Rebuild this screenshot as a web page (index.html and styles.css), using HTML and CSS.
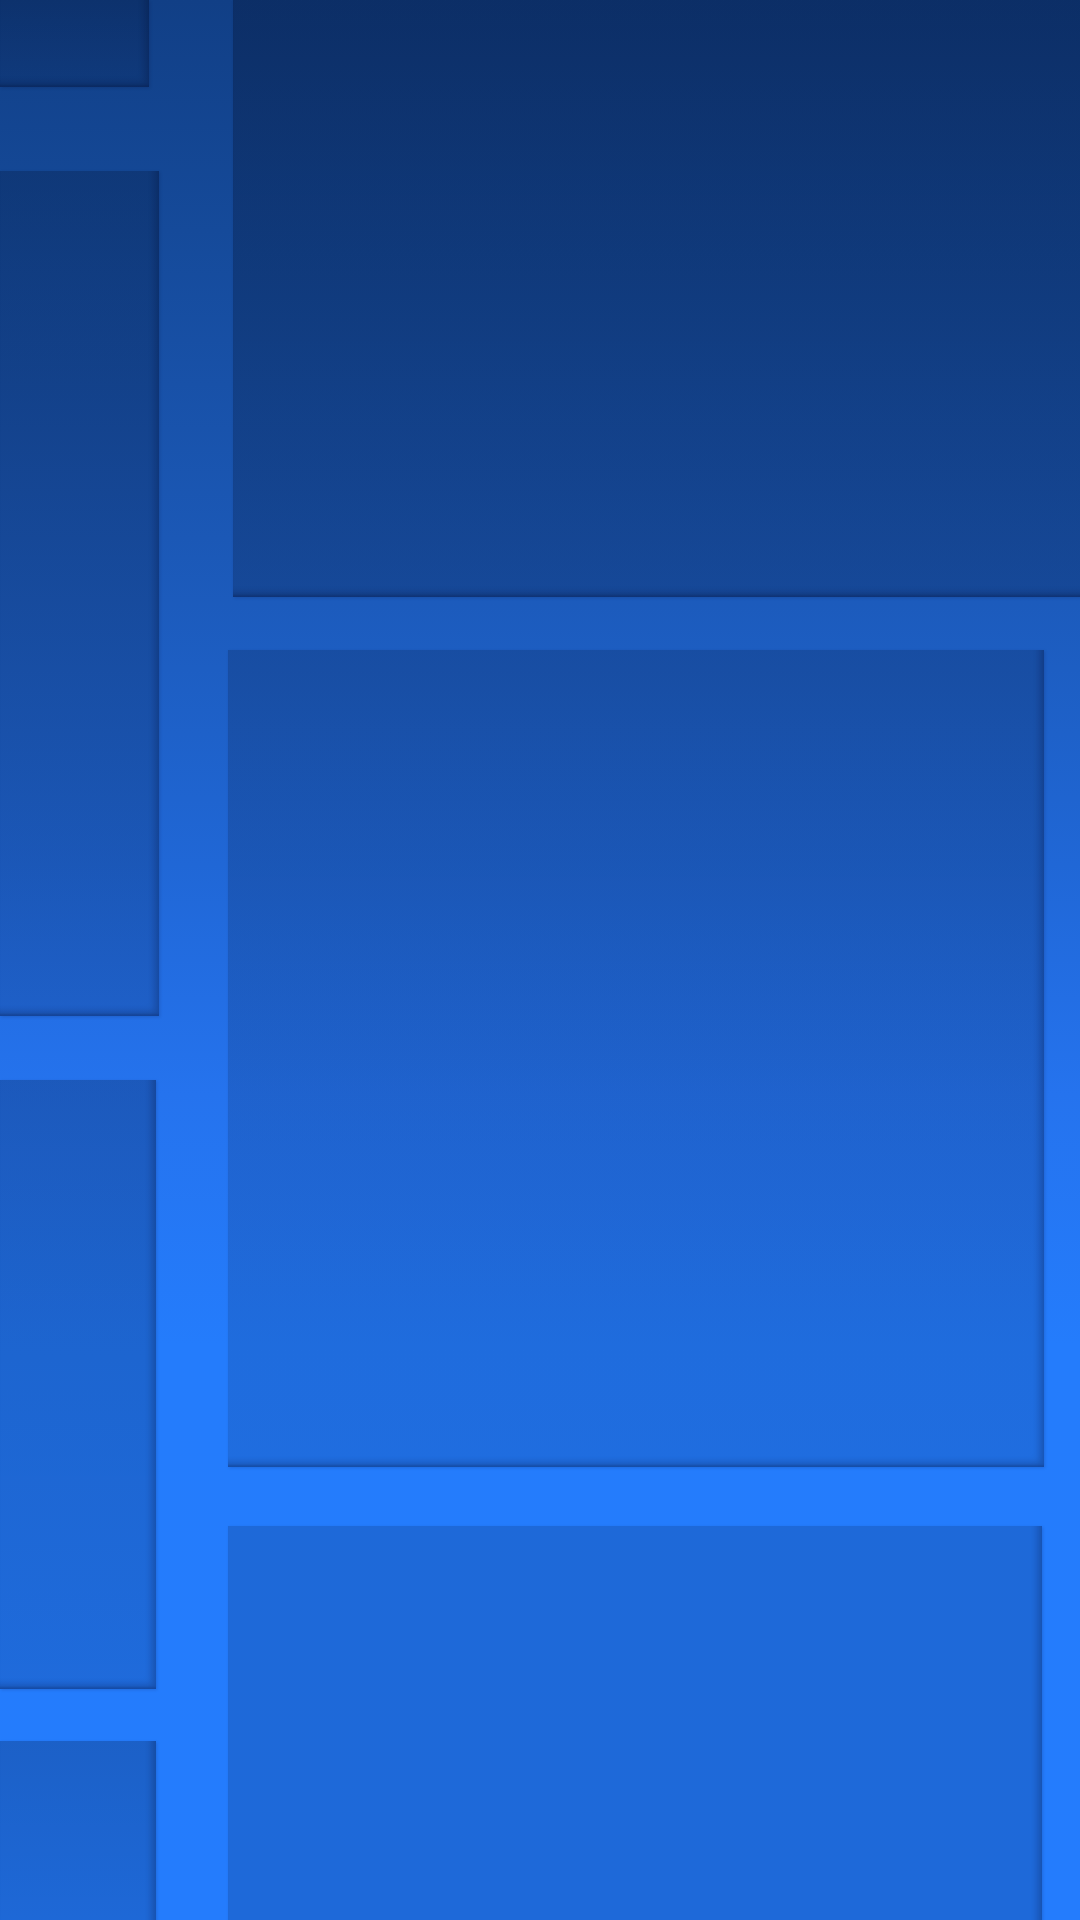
FILE: index.html
```html
<!DOCTYPE html>
<html lang="en">
<head>
<meta charset="utf-8">
<title>Tiles</title>
<link rel="stylesheet" href="styles.css">
</head>
<body>
<main class="wall">
  <div class="col col-left">
    <div class="tile tile-a"></div>
    <div class="tile tile-b"></div>
    <div class="tile tile-c"></div>
    <div class="tile tile-d"></div>
  </div>
  <div class="col col-right">
    <div class="tile tile-e"></div>
    <div class="tile tile-f"></div>
    <div class="tile tile-g"></div>
  </div>
</main>
</body>
</html>
```

FILE: styles.css
```css
html, body {
  margin: 0;
  padding: 0;
  width: 1080px;
  height: 1920px;
  overflow: hidden;
}

body {
  background: linear-gradient(180deg,
    #113f86 0%,
    #154a9a 12%,
    #1b58b6 28%,
    #2067d6 45%,
    #2573ee 57%,
    #247cfc 70%,
    #247cfd 100%);
  font-family: "Liberation Sans", Arial, sans-serif;
}

.wall {
  display: flex;
  gap: 68px;
  width: 1080px;
  height: 1920px;
  overflow: hidden;
}

.col {
  display: flex;
  flex-direction: column;
  flex-shrink: 0;
}

.col-left {
  width: 160px;
}

.col-right {
  flex: 1;
}

.tile {
  flex-shrink: 0;
  background: linear-gradient(180deg, rgba(0, 8, 30, 0.24), rgba(0, 8, 30, 0.15));
  box-shadow:
    inset -7px -7px 7px -3px rgba(0, 10, 40, 0.24),
    inset 0 -3px 2px -1px rgba(0, 10, 40, 0.12),
    1px 1px 3px rgba(0, 10, 40, 0.14);
}

.tile-a {
  width: 149px;
  height: 87px;
}

.tile-b {
  width: 159px;
  height: 845px;
  margin-top: 84px;
}

.tile-c {
  width: 156px;
  height: 609px;
  margin-top: 64px;
}

.tile-d {
  width: 156px;
  height: 240px;
  margin-top: 52px;
}

.tile-e {
  width: 860px;
  height: 597px;
  margin-left: 5px;
  background: linear-gradient(180deg, rgba(0, 8, 30, 0.3), rgba(0, 8, 30, 0.22));
}

.tile-f {
  width: 816px;
  height: 817px;
  margin-top: 53px;
  background: linear-gradient(180deg, rgba(0, 8, 30, 0.19), rgba(0, 8, 30, 0.13));
}

.tile-g {
  width: 814px;
  height: 450px;
  margin-top: 59px;
  background: rgba(0, 8, 30, 0.16);
}
```
